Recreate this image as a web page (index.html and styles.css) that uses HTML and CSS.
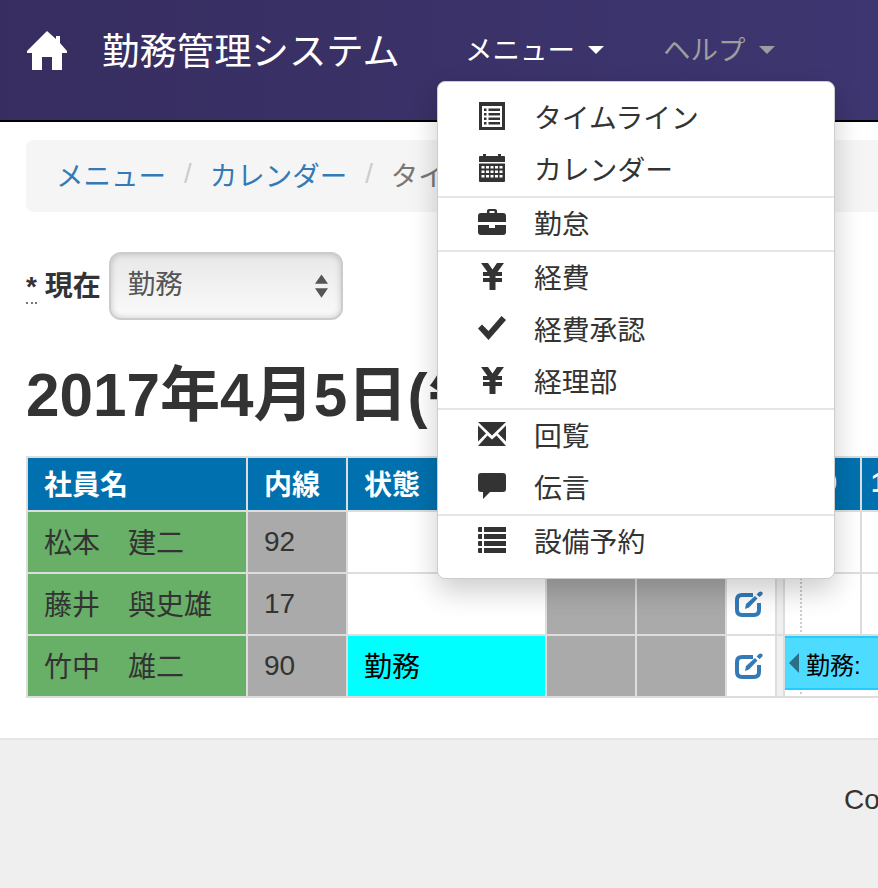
FILE: index.html
```html
<!DOCTYPE html>
<html lang="ja">
<head>
    <meta charset="UTF-8">
    <title>勤務管理システム</title>
    <link rel="stylesheet" href="styles.css">
</head>
<body>

<header class="navbar">
    <a class="home" href="#">
        <svg viewBox="0 0 40 39" width="40" height="39"><path d="M20 0 L29 8 V5 H33 V12 L40 20 V22 H35 V39 H25 V26 H15 V39 H5 V22 H0 V20 Z" fill="#fff"/></svg>
    </a>
    <a class="brand" href="#">勤務管理システム</a>
    <a class="nav-link nav-menu" href="#">メニュー<span class="caret"></span></a>
    <a class="nav-link nav-help" href="#">ヘルプ<span class="caret"></span></a>
</header>

<ul class="dropdown">
    <li><span class="icon">
        <svg viewBox="0 0 26 28" width="26" height="28"><path fill="#333" fill-rule="evenodd" d="M0 0H26V28H0Z M3 4V25H23V4Z"/><path fill="#333" d="M5 6.500H7.500V9H5Z M9.500 6.500H21V9H9.500Z M5 11H7.500V13.500H5Z M9.500 11H21V13.500H9.500Z M5 15.500H7.500V18H5Z M9.500 15.500H21V18H9.500Z M5 20H7.500V22.500H5Z M9.500 20H21V22.500H9.500Z"/></svg>
    </span>タイムライン</li>
    <li><span class="icon">
        <svg viewBox="0 0 26 28" width="26" height="28"><path fill="#333" d="M1 2H4V0H7V2H19V0H22V2H25Q26 2 26 3V8H0V3Q0 2 1 2Z"/><path fill="#333" fill-rule="evenodd" d="M0 9.500H26V27Q26 28 25 28H1Q0 28 0 27Z M2.500 12V14.500H5.500V12Z M7 12V14.500H10V12Z M11.500 12V14.500H14.500V12Z M16 12V14.500H19V12Z M20.500 12V14.500H23.500V12Z M2.500 16.500V19H5.500V16.500Z M7 16.500V19H10V16.500Z M11.500 16.500V19H14.500V16.500Z M16 16.500V19H19V16.500Z M20.500 16.500V19H23.500V16.500Z M2.500 21V23.500H5.500V21Z M7 21V23.500H10V21Z M11.500 21V23.500H14.500V21Z M16 21V23.500H19V21Z M20.500 21V23.500H23.500V21Z"/></svg>
    </span>カレンダー</li>
    <li class="divider"></li>
    <li><span class="icon">
        <svg viewBox="0 0 28 26" width="28" height="26"><path fill="#333" fill-rule="evenodd" d="M9 4V2Q9 0 11 0H17Q19 0 19 2V4H25Q28 4 28 7V13H0V7Q0 4 3 4Z M11.500 2V4H16.500V2Z"/><path fill="#333" d="M0 16H11V19H17V16H28V23Q28 26 25 26H3Q0 26 0 23Z"/></svg>
    </span>勤怠</li>
    <li class="divider"></li>
    <li><span class="icon">
        <svg viewBox="0 0 23 27" width="23" height="27"><path fill="#333" d="M0 0H7L11.500 6.500L16 0H23L16.500 9H21V13H14.500V15H21V19H14.500V27H8.500V19H2V15H8.500V13H2V9H6.500Z"/></svg>
    </span>経費</li>
    <li><span class="icon">
        <svg viewBox="0 0 28 24" width="28" height="24"><path fill="#333" d="M0 12.500L4 8.500L10.500 15L23.500 0L28 4L10.500 24Z"/></svg>
    </span>経費承認</li>
    <li><span class="icon">
        <svg viewBox="0 0 23 27" width="23" height="27"><path fill="#333" d="M0 0H7L11.500 6.500L16 0H23L16.500 9H21V13H14.500V15H21V19H14.500V27H8.500V19H2V15H8.500V13H2V9H6.500Z"/></svg>
    </span>経理部</li>
    <li class="divider"></li>
    <li><span class="icon">
        <svg viewBox="0 0 28 24" width="28" height="24"><path fill="#333" d="M0 0H28L14 13.500Z M0 3.500L8 11.500L0 19.500Z M28 3.500V19.500L20 11.500Z M0 24L9.500 13.500L14 17.500L18.500 13.500L28 24Z"/></svg>
    </span>回覧</li>
    <li><span class="icon">
        <svg viewBox="0 0 28 26" width="28" height="26"><path fill="#333" d="M3 0H25Q28 0 28 3V16Q28 19 25 19H12L5 26V19H3Q0 19 0 16V3Q0 0 3 0Z"/></svg>
    </span>伝言</li>
    <li class="divider"></li>
    <li><span class="icon">
        <svg viewBox="0 0 28 26" width="28" height="26"><path fill="#333" d="M1 0H4V5H1Q0 5 0 4V1Q0 0 1 0Z M6 0H28V5H6Z M1 7H4V12H1Q0 12 0 11V8Q0 7 1 7Z M6 7H28V12H6Z M1 14H4V19H1Q0 19 0 18V15Q0 14 1 14Z M6 14H28V19H6Z M1 21H4V26H1Q0 26 0 25V22Q0 21 1 21Z M6 21H28V26H6Z"/></svg>
    </span>設備予約</li>
</ul>

<main class="content">
    <ol class="breadcrumb">
        <li><a href="#">メニュー</a></li>
        <li class="sep">/</li>
        <li><a href="#">カレンダー</a></li>
        <li class="sep">/</li>
        <li class="active">タイムライン</li>
    </ol>

    <div class="status-form">
        <label><abbr>*</abbr> 現在</label>
        <div class="select">
            <span>勤務</span>
            <svg viewBox="0 0 14 26" width="13" height="25"><path fill="#555" d="M7 0L14 10H0Z M0 15H14L7 25Z"/></svg>
        </div>
    </div>

    <h1>2017年4月5日(午</h1>

    <table class="timeline">
        <tr class="head">
            <th class="c-name">社員名</th>
            <th class="c-ext">内線</th>
            <th class="c-state">状態</th>
            <th class="c-gray"></th>
            <th class="c-gray"></th>
            <th class="c-edit"></th>
            <th class="c-gap"></th>
            <th class="c-hour hour-first">09</th>
            <th class="c-hour hour-next">10</th>
        </tr>
        <tr>
            <td class="name">松本　建二</td>
            <td class="gray">92</td>
            <td></td>
            <td class="gray"></td>
            <td class="gray"></td>
            <td></td>
            <td class="gap"></td>
            <td class="slot"></td>
            <td></td>
        </tr>
        <tr>
            <td class="name">藤井　與史雄</td>
            <td class="gray">17</td>
            <td></td>
            <td class="gray"></td>
            <td class="gray"></td>
            <td class="edit">
                <svg viewBox="0 0 28 27" width="28" height="27"><path fill="none" stroke="#337ab7" stroke-width="4" d="M18 4H7Q2 4 2 9V19Q2 24 7 24H19Q24 24 24 19V12"/><path fill="#337ab7" d="M10 18L11 13L20 5L22.500 7.500L14 16.500Z M21.500 3.500L24 1Q25.500 0 27 1L27.500 1.500Q28 3 27 4L24.500 6Z"/></svg>
            </td>
            <td class="gap"></td>
            <td class="slot"></td>
            <td></td>
        </tr>
        <tr>
            <td class="name">竹中　雄二</td>
            <td class="gray">90</td>
            <td class="working">勤務</td>
            <td class="gray"></td>
            <td class="gray"></td>
            <td class="edit">
                <svg viewBox="0 0 28 27" width="28" height="27"><path fill="none" stroke="#337ab7" stroke-width="4" d="M18 4H7Q2 4 2 9V19Q2 24 7 24H19Q24 24 24 19V12"/><path fill="#337ab7" d="M10 18L11 13L20 5L22.500 7.500L14 16.500Z M21.500 3.500L24 1Q25.500 0 27 1L27.500 1.500Q28 3 27 4L24.500 6Z"/></svg>
            </td>
            <td class="gap"></td>
            <td class="slot bar-cell" colspan="2">
                <div class="bar"><span class="bar-arrow"></span>勤務:</div>
            </td>
        </tr>
    </table>
</main>

<footer class="footer">Copyright</footer>

</body>
</html>
```

FILE: styles.css
```css
html, body {
    margin: 0;
    height: 100%;
    overflow: hidden;
}
body {
    width: 878px;
    position: relative;
    display: flex;
    flex-direction: column;
    font-family: "Liberation Sans", "Noto Sans CJK JP", sans-serif;
    font-size: 28px;
    color: #333;
}
a {
    text-decoration: none;
}

.navbar {
    height: 98px;
    flex: none;
    display: flex;
    align-items: center;
    background: linear-gradient(to right, #372d60, #3d3670);
    border-bottom: 2px solid #000;
    padding-bottom: 22px;
}
.home {
    display: flex;
    margin-left: 27px;
    margin-top: 2px;
}
.brand {
    margin-left: 35px;
    font-size: 37.4px;
    color: #fff;
}
.nav-link {
    display: flex;
    align-items: center;
    font-size: 27.5px;
    margin-bottom: 2px;
}
.nav-menu {
    margin-left: 65px;
    color: #fff;
}
.nav-help {
    margin-left: 59px;
    color: #9d9d9d;
}
.caret {
    width: 0;
    height: 0;
    margin-left: 13px;
    margin-top: 3px;
    border-top: 8px solid;
    border-left: 8px solid transparent;
    border-right: 8px solid transparent;
}

.dropdown {
    position: absolute;
    left: 437px;
    top: 81px;
    width: 396px;
    margin: 0;
    padding: 10px 0;
    list-style: none;
    background: #fff;
    border: 1px solid #ccc;
    border-radius: 8px;
    box-shadow: 0 12px 28px rgba(0, 0, 0, .2);
    z-index: 10;
}
.dropdown li {
    box-sizing: border-box;
    height: 52px;
    padding-bottom: 4px;
    display: flex;
    align-items: center;
    font-size: 27.8px;
}
.dropdown .divider {
    height: 2px;
    padding: 0;
    background: #e5e5e5;
}
.icon {
    width: 28px;
    margin: 0 28px 0 40px;
    display: flex;
    justify-content: center;
}

.content {
    flex: none;
    padding: 18px 26px 0;
}
.breadcrumb {
    display: flex;
    align-items: center;
    gap: 18px;
    height: 72px;
    width: 900px;
    box-sizing: border-box;
    margin: 0;
    padding: 0 30px 4px;
    list-style: none;
    background: #f5f5f5;
    border-radius: 8px;
    font-size: 27.5px;
    white-space: nowrap;
}
.breadcrumb a {
    color: #337ab7;
}
.breadcrumb .sep {
    color: #ccc;
}
.breadcrumb .active {
    color: #777;
}

.status-form {
    display: flex;
    align-items: center;
    margin-top: 40px;
    font-weight: bold;
}
.status-form label {
    margin-bottom: 5px;
}
.status-form abbr {
    border-bottom: 2px dotted #777;
}
.select {
    display: flex;
    align-items: center;
    justify-content: space-between;
    box-sizing: border-box;
    width: 234px;
    height: 68px;
    margin-left: 8px;
    padding: 0 13px 0 17px;
    border: 2px solid #ccc;
    border-radius: 12px;
    background: linear-gradient(to bottom, #e8e8e8, #fafafa);
    box-shadow: inset 0 0 6px rgba(0, 0, 0, .2);
    font-size: 27.5px;
    font-weight: normal;
    color: #555;
}
.select span {
    margin-bottom: 8px;
}

h1 {
    margin: 36px 0 20px;
    font-size: 60.2px;
    line-height: 80px;
    font-weight: bold;
    white-space: nowrap;
}

.timeline {
    border-collapse: collapse;
    table-layout: fixed;
    width: 911px;
}
.timeline th, .timeline td {
    box-sizing: border-box;
    border: 2px solid #ddd;
    padding: 0 16px;
    text-align: left;
    white-space: nowrap;
}
.timeline th {
    height: 54px;
    padding-bottom: 2px;
    background: #0071ae;
    color: #fff;
}
.timeline td {
    height: 62px;
}
.c-name { width: 220px; }
.c-ext { width: 100px; }
.c-state { width: 199px; }
.c-gray { width: 90px; }
.c-edit { width: 50px; }
.c-gap { width: 8px; }
.c-hour { width: 77px; }
.timeline .c-gap, .timeline .gap {
    padding: 0;
}
.timeline .gap {
    background: #f0f0f0;
}
.timeline .c-gap {
    background: #0071ae;
}
.timeline .name {
    padding-bottom: 3px;
    background: #68af68;
}
.timeline .gray {
    background: #aaa;
}
.timeline .working {
    padding-bottom: 3px;
    background: #0ff;
    color: #000;
}
.timeline .edit {
    padding: 0 8px;
    line-height: 0;
}
.timeline .hour-first {
    padding-left: 21px;
    padding-right: 0;
}
.timeline .hour-next {
    padding-left: 9px;
    padding-right: 0;
}
.timeline .slot {
    padding: 0;
    background: repeating-linear-gradient(to bottom, #ccc 0 2px, transparent 2px 4px) 15px 0 / 2px 100% no-repeat;
}
.timeline .bar-cell {
    vertical-align: top;
}
.bar {
    display: flex;
    align-items: center;
    height: 50px;
    background: #4ddbff;
    border-top: 2px solid #22ccff;
    border-bottom: 2px solid #22ccff;
    padding-left: 4px;
    font-size: 24px;
    color: #000;
}
.bar-arrow {
    width: 0;
    height: 0;
    margin-right: 7px;
    border-top: 10px solid transparent;
    border-bottom: 10px solid transparent;
    border-right: 10px solid #2a6f85;
}

.footer {
    flex: 1;
    margin-top: 40px;
    padding: 44px 0 0 844px;
    background: #efefef;
    border-top: 2px solid #e5e5e5;
    white-space: nowrap;
}
```
